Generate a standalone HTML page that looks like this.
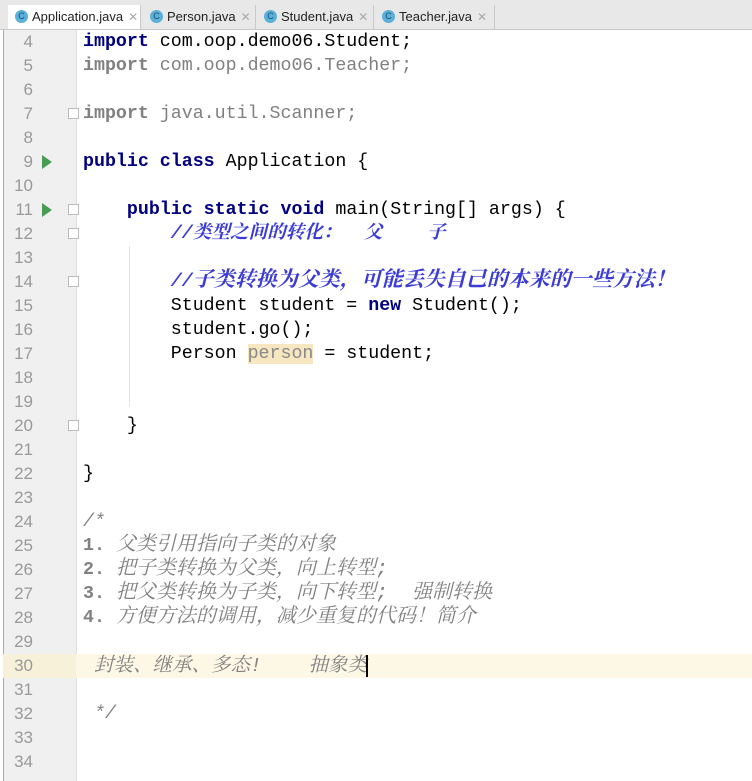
<!DOCTYPE html>
<html><head><meta charset="utf-8"><style>
body{margin:0;width:752px;height:781px;overflow:hidden;background:#fff;position:relative;font-family:"Liberation Mono",monospace}
.tabs{position:absolute;left:0;top:0;width:752px;height:29px;background:#e8e8e8;border-bottom:1px solid #c9c9c9}
.tab{position:absolute;top:5px;height:24px;font:13px "Liberation Sans",sans-serif;color:#222;line-height:24px;border-right:1px solid #c9c9c9;box-sizing:border-box;padding-left:24px}
.tab .ic{position:absolute;left:7px;top:5px;width:13px;height:13px;border-radius:50%;background:#5ab0d8;color:#1a4f6e;font-size:9px;line-height:13px;text-align:center}
.tab .x{color:#aaa;font-size:12px;margin-left:5px}
.gut{position:absolute;left:3px;top:30px;width:72px;height:751px;background:#f0f0f0;border-left:1px solid #aaa;border-right:1px solid #ddd}
.ln{position:absolute;left:9px;width:24px;font:17px "Liberation Sans",sans-serif;color:#999;text-align:right;line-height:24px}
.code{position:absolute;left:83px;font-size:18.3px;line-height:24px;white-space:pre;color:#000}
.k{color:#000080;font-weight:bold}
.g{color:#808080}
.cm{color:#3b3bd6;font-style:italic;font-weight:bold;font-family:"Liberation Mono","Noto Serif CJK SC",monospace}
.bc{color:#808080;font-style:italic;font-family:"Liberation Mono","Noto Serif CJK SC",monospace}
.bc b{font-style:normal}
.run{position:absolute;left:42px;width:0;height:0;border-left:10px solid #499c54;border-top:7px solid transparent;border-bottom:7px solid transparent}
.fold{position:absolute;left:68px;width:9px;height:9px;border:1px solid #bbb;background:#fff}
</style></head><body>
<div class="tabs">
<div class="tab" style="left:8px;width:133px;background:#fff"><span class="ic">C</span>Application.java<span class="x">✕</span></div>
<div class="tab" style="left:143px;width:113px"><span class="ic">C</span>Person.java<span class="x">✕</span></div>
<div class="tab" style="left:257px;width:117px"><span class="ic">C</span>Student.java<span class="x">✕</span></div>
<div class="tab" style="left:375px;width:120px"><span class="ic">C</span>Teacher.java<span class="x">✕</span></div>
</div>
<div class="gut"></div>
<div style="position:absolute;left:76px;top:654px;width:676px;height:24px;background:#fdf8e5"></div>
<div style="position:absolute;left:3px;top:654px;width:73px;height:24px;background:#f7f1d9"></div>
<div style="position:absolute;left:129px;top:246px;width:1px;height:160px;background:#e4e4e4"></div>
<div id="lns"></div>
<div class="run" style="top:155px"></div>
<div class="run" style="top:203px"></div>
<div class="fold" style="top:108px"></div>
<div class="fold" style="top:204px"></div>
<div class="fold" style="top:228px"></div>
<div class="fold" style="top:276px"></div>
<div class="fold" style="top:420px"></div>
<div class="code" style="top:30px"><span class="k">import</span> com.oop.demo06.Student;</div>
<div class="code g" style="top:54px"><span style="font-weight:bold">import</span> com.oop.demo06.Teacher;</div>
<div class="code g" style="top:102px"><span style="font-weight:bold">import</span> java.util.Scanner;</div>
<div class="code" style="top:150px"><span class="k">public class</span> Application {</div>
<div class="code" style="top:198px">    <span class="k">public static void</span> main(String[] args) {</div>
<div class="code" style="top:222px">        <span class="cm">//<span style="font-size:18.6px">类型之间的转化：  父    子</span></span></div>
<div class="code" style="top:270px">        <span class="cm">//<span style="font-size:21px">子类转换为父类，可能丢失自己的本来的一些方法！</span></span></div>
<div class="code" style="top:294px">        Student student = <span class="k">new</span> Student();</div>
<div class="code" style="top:318px">        student.go();</div>
<div class="code" style="top:342px">        Person <span style="background:#f6e7c0;color:#888">person</span> = student;</div>
<div class="code" style="top:414px">    }</div>
<div class="code" style="top:462px">}</div>
<div class="code bc" style="top:510px">/*</div>
<div class="code bc" style="top:534px"><b>1.</b> <span style="font-size:20px">父类引用指向子类的对象</span></div>
<div class="code bc" style="top:558px"><b>2.</b> <span style="font-size:20px">把子类转换为父类，向上转型;</span></div>
<div class="code bc" style="top:582px"><b>3.</b> <span style="font-size:20px">把父类转换为子类，向下转型;  强制转换</span></div>
<div class="code bc" style="top:606px"><b>4.</b> <span style="font-size:20px">方便方法的调用，减少重复的代码！简介</span></div>
<div class="code bc" style="top:654px"> <span style="font-size:19.5px">封装、继承、多态!    抽象类</span></div>
<div style="position:absolute;left:366px;top:655px;width:2px;height:22px;background:#000"></div>
<div class="code bc" style="top:702px"> */</div>
<script>
var h='';for(var n=4;n<=34;n++){h+='<div class="ln" style="top:'+(30+(n-4)*24)+'px">'+n+'</div>';}
document.getElementById('lns').innerHTML=h;
</script>
</body></html>
